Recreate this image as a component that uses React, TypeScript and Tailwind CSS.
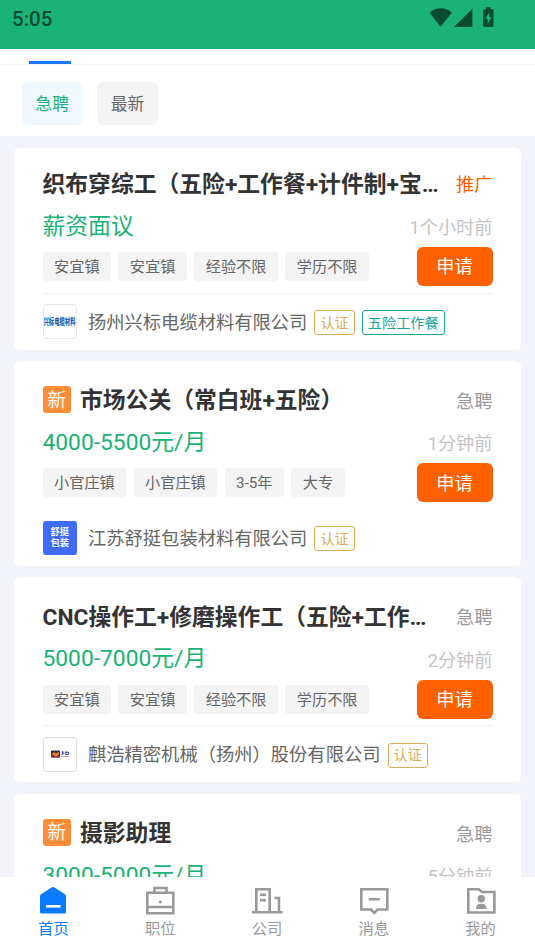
import type { ReactNode } from 'react';
import clsx from 'clsx';

type Job = {
  title: string;
  isNew?: boolean;
  label: string;
  promoted?: boolean;
  salary: string;
  time: string;
  tags?: string[];
  company?: string;
  welfare?: string;
  divider?: boolean;
  logo?: ReactNode;
};

function CableLogo() {
  return (
    <div className="flex h-[34.5px] w-[34.5px] shrink-0 items-center justify-center overflow-hidden rounded-[3px] border border-[#e8e8e8] bg-white">
      <span className="-mx-3 scale-x-[.56] whitespace-nowrap text-[9.5px] leading-none font-black text-[#1f68b0]">
        兴标电缆材料
      </span>
    </div>
  );
}

function PackLogo() {
  return (
    <div className="flex h-[34.5px] w-[34.5px] shrink-0 flex-col items-center justify-center rounded-[3px] bg-[#3e6bf8] text-[9.3px] leading-[10.8px] font-bold text-white">
      <span>舒挺</span>
      <span>包装</span>
    </div>
  );
}

function MachineLogo() {
  return (
    <div className="flex h-[34.5px] w-[34.5px] shrink-0 items-center justify-center rounded-[3px] border border-[#e0e0e0] bg-white">
      <svg width="20" height="8" viewBox="0 0 20 8">
        <path d="M1 .5h9v7H1z" fill="#3c3040" />
        <path d="M1.5 4.5 4 2l2 1.500L9 2v3L6 6.500z" fill="#ee7a2b" />
        <path d="M1 6.500h9v1H1z" fill="#b9432f" />
        <path d="M11.500 2.200h2.500M12.500 1v4M11.500 4.500l3-1M16 1v4M15 2.500h4M18 1.500l1 3.500M15.500 4.500h3" stroke="#3d5fae" fill="none" />
        <path d="M11 6.500h8.500" stroke="#e39a9a" />
      </svg>
    </div>
  );
}

const jobs: Job[] = [
  {
    title: '织布穿综工（五险+工作餐+计件制+宝…',
    label: '推广',
    promoted: true,
    salary: '薪资面议',
    time: '1个小时前',
    tags: ['安宜镇', '安宜镇', '经验不限', '学历不限'],
    company: '扬州兴标电缆材料有限公司',
    welfare: '五险工作餐',
    divider: true,
    logo: <CableLogo />,
  },
  {
    title: '市场公关（常白班+五险）',
    isNew: true,
    label: '急聘',
    salary: '4000-5500元/月',
    time: '1分钟前',
    tags: ['小官庄镇', '小官庄镇', '3-5年', '大专'],
    company: '江苏舒挺包装材料有限公司',
    logo: <PackLogo />,
  },
  {
    title: 'CNC操作工+修磨操作工（五险+工作…',
    label: '急聘',
    salary: '5000-7000元/月',
    time: '2分钟前',
    tags: ['安宜镇', '安宜镇', '经验不限', '学历不限'],
    company: '麒浩精密机械（扬州）股份有限公司',
    divider: true,
    logo: <MachineLogo />,
  },
  {
    title: '摄影助理',
    isNew: true,
    label: '急聘',
    salary: '3000-5000元/月',
    time: '5分钟前',
  },
];

function StatusBar() {
  return (
    <div className="flex h-[48.5px] shrink-0 items-start justify-between bg-[#19b377] pr-[39.5px] pl-[12px] text-[#0b4b32]">
      <span className="mt-[4px] text-[20.5px] leading-[30px] font-medium">5:05</span>
      <svg className="mt-[7px]" width="67" height="21" viewBox="0 0 67 21" fill="currentColor">
        <path d="M.5 5.800Q5 1.200 11.700 1.200T22.800 5.800L11.700 19.800z" />
        <path d="M43.400 1.700V20H25z" />
        <path
          fillRule="evenodd"
          d="M57 .3h4.600v2h1.700q1.200 0 1.200 1.200v15.300q0 1.200-1.200 1.200h-8q-1.200 0-1.200-1.200V3.500q0-1.200 1.200-1.200H57zM60.200 5.500l-3.900 6.200h2.400v4.800l4-6.200h-2.500z"
        />
      </svg>
    </div>
  );
}

function JobCard({ job, first }: { job: Job; first: boolean }) {
  return (
    <div className={clsx('shrink-0 rounded-[6px] bg-white px-[28.5px]', first ? 'pt-[19px]' : 'pt-[22px]')}>
      <div className="flex h-[34px] items-center justify-between">
        <div className="flex items-center text-[22.8px] leading-[30px] text-[#333]">
          {job.isNew && (
            <span className="mr-[9px] flex h-[27px] w-[28.5px] items-center justify-center rounded-[3px] bg-[#ff8d37] pt-[1.5px] text-[19px] text-white">
              新
            </span>
          )}
          <h2 className="pt-[3px] font-bold whitespace-nowrap">{job.title}</h2>
        </div>
        <span className={clsx('pt-[3px] text-[18.2px]', job.promoted ? 'text-[#ff6000]' : 'text-[#999]')}>
          {job.label}
        </span>
      </div>
      <div className="flex h-[46.5px] items-center justify-between pt-[5.5px]">
        <span className="text-[22.8px] leading-[34px] text-[#19b377]">{job.salary}</span>
        <span className="pt-[2.5px] text-[18.2px] text-[#c4c4c4]">{job.time}</span>
      </div>
      {job.tags && (
        <div className="flex h-[39px] items-center justify-between">
          <div className="flex gap-[7.3px]">
            {job.tags.map((tag, i) => (
              <span
                key={i}
                className="flex h-[29px] items-center rounded-[3px] bg-[#f4f4f4] px-[11.5px] pt-[2px] text-[15.2px] text-[#666]"
              >
                {tag}
              </span>
            ))}
          </div>
          <button className="h-[39px] w-[76px] rounded-[6px] bg-[#ff6000] pt-[1px] text-[18.2px] text-white">
            申请
          </button>
        </div>
      )}
      {job.company && (
        <div
          className={clsx(
            'mt-[6.5px] flex h-[57px] items-center border-t',
            job.divider ? 'border-[#f2f2f2]' : 'border-transparent',
          )}
        >
          {job.logo}
          <span className="ml-[11px] pt-[1.5px] text-[18.3px] text-[#666]">{job.company}</span>
          <span className="mt-[2px] ml-[7px] flex h-[25px] items-center rounded-[3px] border border-[#dcae5c] px-[5px] pt-[1.5px] text-[14.2px] text-[#dcae5c]">
            认证
          </span>
          {job.welfare && (
            <span className="mt-[2px] ml-[7px] flex h-[25px] items-center rounded-[3px] border border-[#18a5a0] px-[5px] pt-[1.5px] text-[14.2px] text-[#18a5a0]">
              {job.welfare}
            </span>
          )}
        </div>
      )}
    </div>
  );
}

function NavItem({ text, active, children }: { text: string; active?: boolean; children: ReactNode }) {
  return (
    <div className={clsx('flex flex-1 flex-col items-center pt-[8px]', active ? 'text-[#0a7aff]' : 'text-[#999]')}>
      <svg width="32" height="32" viewBox="0 0 32 32" fill="none" stroke="currentColor" strokeWidth="2.6">
        {children}
      </svg>
      <span className="mt-[1px] text-[15.3px] leading-[23px]">{text}</span>
    </div>
  );
}

function BottomNav() {
  return (
    <nav className="flex h-[74px] shrink-0 bg-white pr-[1px]">
      <NavItem text="首页" active>
        <path
          d="M14.500 2.400q1.500-1 3 0L28 9.300q1 .8 1 2V27q0 1.500-1.500 1.500h-23Q3 28.500 3 27V11.300q0-1.200 1-2z"
          fill="currentColor"
          stroke="none"
        />
        <path d="M9 21.300h14.500" stroke="white" />
      </NavItem>
      <NavItem text="职位">
        <path d="M3.300 7.700h26v20.500h-26zM10.500 7.500V3h12v4.500M3.300 22h26" />
        <circle cx="16.300" cy="17" r="1.600" fill="currentColor" stroke="none" />
      </NavItem>
      <NavItem text="公司">
        <path d="M1 27.300h30.500M5.300 27V4.300h13.400V27M23.500 13H28v14M9 9.700h6M9 15.200h6" />
      </NavItem>
      <NavItem text="消息">
        <path d="M3.300 4.300h26V24.500H19.500L16.300 27.800l-3.200-3.300H3.300zM10.800 14.300h11" />
      </NavItem>
      <NavItem text="我的">
        <path d="M3.300 4.200h10.500l3.200 2.800h12.400v20.500H3.300z" />
        <circle cx="16.200" cy="13.700" r="3.700" fill="currentColor" stroke="none" />
        <path d="M10.800 24q0-5.300 5.400-5.300t5.400 5.300z" fill="currentColor" stroke="none" />
      </NavItem>
    </nav>
  );
}

export default function App() {
  return (
    <div className="flex h-[951px] w-[535px] flex-col overflow-hidden bg-[#f3f4f9] font-[Roboto,'Noto_Sans_CJK_SC',sans-serif]">
      <StatusBar />
      <div className="h-[87.5px] shrink-0 bg-white">
        <div className="flex h-[16px] items-end border-b border-[#f4f4f4] pl-[29px]">
          <div className="h-[3px] w-[42px] bg-[#1877f2]" />
        </div>
        <div className="flex gap-[14px] pt-[17.5px] pl-[21.5px] text-[16.7px]">
          <button className="h-[43px] w-[61.5px] rounded-[6px] bg-[#f0f7ff] pt-[1.5px] text-[#19b377]">急聘</button>
          <button className="h-[43px] w-[61px] rounded-[6px] bg-[#f4f4f4] pt-[1.5px] text-[#666]">最新</button>
        </div>
      </div>
      <main className="flex min-h-0 flex-1 flex-col gap-[11.4px] overflow-hidden px-[14px] pt-[11.5px]">
        {jobs.map((job, i) => (
          <JobCard key={i} job={job} first={i === 0} />
        ))}
      </main>
      <BottomNav />
    </div>
  );
}
